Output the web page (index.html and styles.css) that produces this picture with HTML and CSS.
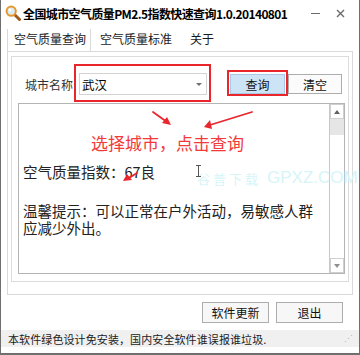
FILE: index.html
```html
<!DOCTYPE html>
<html lang="zh-CN">
<head>
  <meta charset="UTF-8">
  <meta name="viewport" content="width=device-width, initial-scale=1.0">
  <title>全国城市空气质量PM2.5指数快速查询</title>
  <link rel="stylesheet" href="styles.css">
</head>
<body>
  <div class="window">
    <!-- Title bar -->
    <div class="titlebar">
      <svg class="app-icon" width="16" height="16" viewBox="0 0 16 16">
        <line x1="9.5" y1="9.5" x2="14.5" y2="14.5" stroke="#9a5c1c" stroke-width="3" stroke-linecap="round"/>
        <circle cx="6.2" cy="6.2" r="4.6" fill="#d6ecf8" stroke="#e8962c" stroke-width="2"/>
        <circle cx="5" cy="5" r="1.4" fill="#ffffff"/>
      </svg>
      <div class="title">全国城市空气质量PM2.5指数快速查询1.0.20140801</div>
      <div class="win-btn min"><span class="min-line"></span></div>
      <div class="win-btn close">
        <svg width="9" height="9" viewBox="0 0 9 9">
          <path d="M1 1 L8 8 M8 1 L1 8" stroke="#6b6b6b" stroke-width="1.4"/>
        </svg>
      </div>
    </div>

    <!-- Tabs -->
    <div class="tabs">
      <div class="tab active">空气质量查询</div>
      <div class="tab">空气质量标准</div>
      <div class="tab">关于</div>
    </div>

    <div class="panel">
      <div class="group">
        <div class="search-row">
          <span class="label">城市名称</span>
          <div class="combo">
            <span>武汉</span>
            <span class="combo-arrow"></span>
          </div>
          <button class="btn query">查询</button>
          <button class="btn clear">清空</button>
        </div>

        <div class="result-box">
          <div class="result-text">
            <p>空气质量指数：67良</p>
            <p class="tip">温馨提示：可以正常在户外活动，易敏感人群应减少外出。</p>
          </div>
          <div class="scrollbar">
            <div class="sb-btn"><span class="tri up"></span></div>
            <div class="sb-thumb"></div>
            <div class="sb-track"></div>
            <div class="sb-btn"><span class="tri down"></span></div>
          </div>
        </div>
      </div>
    </div>

    <div class="bottom-row">
      <button class="btn wide">软件更新</button>
      <button class="btn wide">退出</button>
    </div>

    <div class="statusbar">
      <span>本软件绿色设计免安装，国内安全软件谁误报谁垃圾.</span>
      <span class="grip">⋰</span>
    </div>

    <!-- Annotations drawn over the screenshot -->
    <div class="mark mark-combo"></div>
    <div class="mark mark-query"></div>
    <div class="hint">选择城市，点击查询</div>
    <div class="watermark">
      <span class="wm-cn">谷普下载</span>
      <span class="wm-en">GPXZ.COM</span>
    </div>
    <svg class="arrows" width="360" height="355" viewBox="0 0 360 355">
      <g stroke="#e8262c" stroke-width="1.8" fill="#e8262c" stroke-linecap="round">
        <line x1="153" y1="112" x2="167" y2="122"/>
        <polygon points="171,125 162,123 167,117" stroke="none"/>
        <line x1="252" y1="112" x2="210" y2="125"/>
        <polygon points="204,127 210,120 212,129" stroke="none"/>
        <line x1="137" y1="173" x2="129" y2="178"/>
        <polygon points="123,181 127,174 132,180" stroke="none"/>
      </g>
      <g stroke="#555" stroke-width="1">
        <line x1="198.5" y1="166" x2="198.5" y2="176"/>
        <line x1="196" y1="165.5" x2="201" y2="165.5"/>
        <line x1="196" y1="176.5" x2="201" y2="176.5"/>
      </g>
    </svg>
  </div>
</body>
</html>
```

FILE: styles.css
```css
* {
  margin: 0;
  padding: 0;
  box-sizing: border-box;
  font-family: "Noto Sans CJK SC", "Noto Sans", sans-serif;
}

body {
  background-color: #ffffff;
}

.window {
  position: relative;
  width: 360px;
  height: 355px;
  background-color: #ffffff;
  border-left: 1px solid #6f6f6f;
  border-right: 1px solid #6f6f6f;
  border-bottom: 2px solid #6f6f6f;
  color: #1a1a1a;
}

/* Title bar */
.titlebar {
  height: 26px;
  display: flex;
  align-items: center;
  padding-left: 4px;
}

.app-icon {
  flex-shrink: 0;
  margin-right: 2px;
  margin-top: -1px;
}

.title {
  font-size: 12px;
  font-weight: bold;
  color: #000;
  white-space: nowrap;
  letter-spacing: -0.6px;
}

.win-btn {
  display: flex;
  align-items: center;
  justify-content: center;
  height: 26px;
}

.min {
  margin-left: auto;
  width: 26px;
}

.min-line {
  display: block;
  width: 9px;
  height: 1px;
  background-color: #6b6b6b;
}

.close {
  width: 24px;
  margin-right: 7px;
}

/* Tabs */
.tabs {
  height: 25px;
  display: flex;
  padding-left: 6px;
  font-size: 12px;
}

.tab {
  display: flex;
  align-items: center;
  padding: 0 9px;
  color: #1a1a1a;
}

.tab.active {
  padding: 0 4px 0 6px;
  margin-top: 3px;
  border-left: 1px solid #d9d9d9;
  border-right: 1px solid #d9d9d9;
  padding-bottom: 3px;
}

/* Tab content */
.panel {
  margin: 0 6px;
  height: 244px;
  border: 1px solid #d9d9d9;
  padding: 4px 3px 12px 3px;
}

.group {
  border: 1px solid #dcdcdc;
  padding: 16px 3px 7px 6px;
}

.search-row {
  display: flex;
  align-items: center;
  height: 22px;
  padding-left: 7px;
  font-size: 12px;
}

.label {
  color: #333;
  width: 48px;
}

.combo {
  margin-left: 6px;
  width: 128px;
  height: 22px;
  border: 1px solid #d4d4d4;
  display: flex;
  align-items: center;
  justify-content: space-between;
  padding: 0 4px 0 2px;
  font-size: 12.5px;
  color: #000;
}

.combo-arrow {
  width: 0;
  height: 0;
  border-left: 3px solid transparent;
  border-right: 3px solid transparent;
  border-top: 3px solid #707070;
}

.btn {
  height: 20px;
  border: 1px solid #adadad;
  background-color: #f7f7f7;
  font-size: 12px;
  color: #111;
  font-family: "Noto Sans CJK SC", sans-serif;
}

.query {
  margin-left: 23px;
  width: 55px;
  background-color: #cde4f7;
  border-color: #a9c9e6;
}

.clear {
  margin-left: 3px;
  width: 54px;
  background-color: #fbfbfb;
}

.result-box {
  margin-top: 8px;
  height: 171px;
  border: 1px solid #b4b4b4;
  display: flex;
}

.result-text {
  flex: 1;
  padding: 59px 4px 0 4px;
  font-size: 14.5px;
  line-height: 17.5px;
  color: #222;
}

.result-text .tip {
  margin-top: 21px;
  width: 300px;
}

.scrollbar {
  width: 15px;
  display: flex;
  flex-direction: column;
  border-left: 1px solid #c8c8c8;
}

.sb-btn {
  height: 15px;
  display: flex;
  align-items: center;
  justify-content: center;
  background-color: #ffffff;
  border: 1px solid #cfcfcf;
}

.sb-thumb {
  height: 16px;
  background-color: #e6e6e6;
}

.sb-track {
  flex: 1;
  background-color: #ffffff;
}

.tri {
  width: 0;
  height: 0;
  border-left: 3px solid transparent;
  border-right: 3px solid transparent;
}

.tri.up {
  border-bottom: 4px solid #606060;
}

.tri.down {
  border-top: 4px solid #909090;
}

/* Bottom buttons */
.bottom-row {
  display: flex;
  justify-content: flex-end;
  gap: 7px;
  margin-top: 7px;
  padding-right: 16px;
}

.btn.wide {
  width: 67px;
  height: 21px;
}

.statusbar {
  margin-top: 7px;
  height: 17px;
  background-color: #f0f0f0;
  display: flex;
  align-items: center;
  justify-content: space-between;
  padding: 0 6px 0 7px;
  font-size: 11px;
  color: #222;
  letter-spacing: 0.1px;
}

.grip {
  color: #b0b0b0;
  font-size: 9px;
}

/* Annotations */
.mark {
  position: absolute;
  border: 2px solid #e8262c;
}

.mark-combo {
  left: 73px;
  top: 64px;
  width: 137px;
  height: 38px;
}

.mark-query {
  left: 226px;
  top: 70px;
  width: 61px;
  height: 26px;
}

.hint {
  position: absolute;
  left: 90px;
  top: 130px;
  font-size: 17px;
  color: #f23a3a;
  white-space: nowrap;
}

.watermark {
  position: absolute;
  left: 196px;
  top: 168px;
  display: flex;
  align-items: center;
  color: #d6f5f8;
  white-space: nowrap;
}

.wm-cn {
  font-size: 13px;
  letter-spacing: 3px;
}

.wm-en {
  margin-left: 6px;
  font-family: "Liberation Sans", sans-serif;
  font-size: 17px;
}

.arrows {
  position: absolute;
  left: -1px;
  top: 0;
}
```
